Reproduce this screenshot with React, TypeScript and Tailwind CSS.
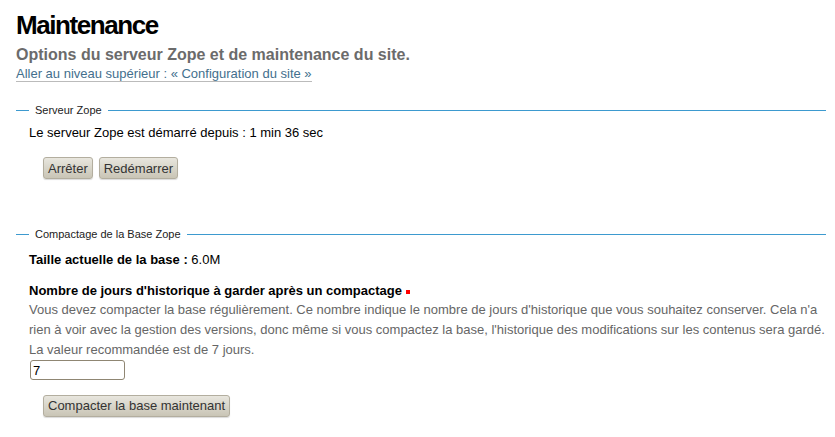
import React from 'react';

const font = { fontFamily: '"Liberation Sans", Arial, sans-serif' };

const Button: React.FC<{ label: string }> = ({ label }) => (
  <button
    type="button"
    className="h-[22px] px-[4px] rounded-[3px] border border-[#b3ae9f] bg-gradient-to-b from-[#e8e6de] to-[#c9c5b6] text-[13px] leading-none text-[#333] shadow-[0_1px_1px_rgba(0,0,0,0.15)]"
  >
    {label}
  </button>
);

const Section: React.FC<{ legend: string; children: React.ReactNode }> = ({ legend, children }) => (
  <section className="ml-[16px] mr-[9px]">
    <div className="flex items-center h-[13px]">
      <div className="w-[13px] h-px bg-[#3d9acf]" />
      <span className="px-[6px] text-[11px] leading-[13px] text-[#222]">{legend}</span>
      <div className="flex-1 h-px bg-[#3d9acf]" />
    </div>
    <div className="pl-[13px]">{children}</div>
  </section>
);

export default function App() {
  return (
    <div className="bg-white w-[835px] h-[437px] overflow-hidden text-black" style={font}>
      <div className="px-[16px] pt-[10px]">
        <h1 className="text-[26px] font-bold leading-[30px] tracking-[-0.055em]">Maintenance</h1>
        <p className="mt-[6px] text-[16px] font-bold leading-[17px] text-[#6b6b6b]">
          Options du serveur Zope et de maintenance du site.
        </p>
        <a href="#" className="block w-fit mt-[3px] text-[13px] leading-[15px] text-[#436f8d] border-b border-[#bbb]">
          Aller au niveau supérieur : « Configuration du site »
        </a>
      </div>

      <div className="mt-[22px]">
        <Section legend="Serveur Zope">
          <p className="mt-[7px] text-[13px] leading-[18px]">
            Le serveur Zope est démarré depuis : 1 min 36 sec
          </p>
          <div className="mt-[15px] ml-[14px] flex gap-[6px]">
            <Button label="Arrêter" />
            <Button label="Redémarrer" />
          </div>
        </Section>
      </div>

      <div className="mt-[49px]">
        <Section legend="Compactage de la Base Zope">
          <p className="mt-[10px] text-[13px] leading-[18px]">
            <span className="font-bold">Taille actuelle de la base :</span> 6.0M
          </p>
          <div className="mt-[13px] text-[13px] leading-[18px] font-bold">
            Nombre de jours d'historique à garder après un compactage
            <span className="ml-[4px] inline-block align-middle w-[4px] h-[4px] bg-[#f00]" />
          </div>
          <p className="text-[13px] leading-[20px] text-[#666]">
            Vous devez compacter la base régulièrement. Ce nombre indique le nombre de jours d'historique que vous
            souhaitez conserver. Cela n'a rien à voir avec la gestion des versions, donc même si vous compactez la
            base, l'historique des modifications sur les contenus sera gardé. La valeur recommandée est de 7 jours.
          </p>
          <input
            type="text"
            defaultValue="7"
            className="ml-[1px] block w-[95px] h-[20px] px-[2px] rounded-[3px] border border-[#8f8673] text-[13px] text-black outline-none"
          />
          <div className="mt-[13px] ml-[14px]">
            <Button label="Compacter la base maintenant" />
          </div>
        </Section>
      </div>
    </div>
  );
}
